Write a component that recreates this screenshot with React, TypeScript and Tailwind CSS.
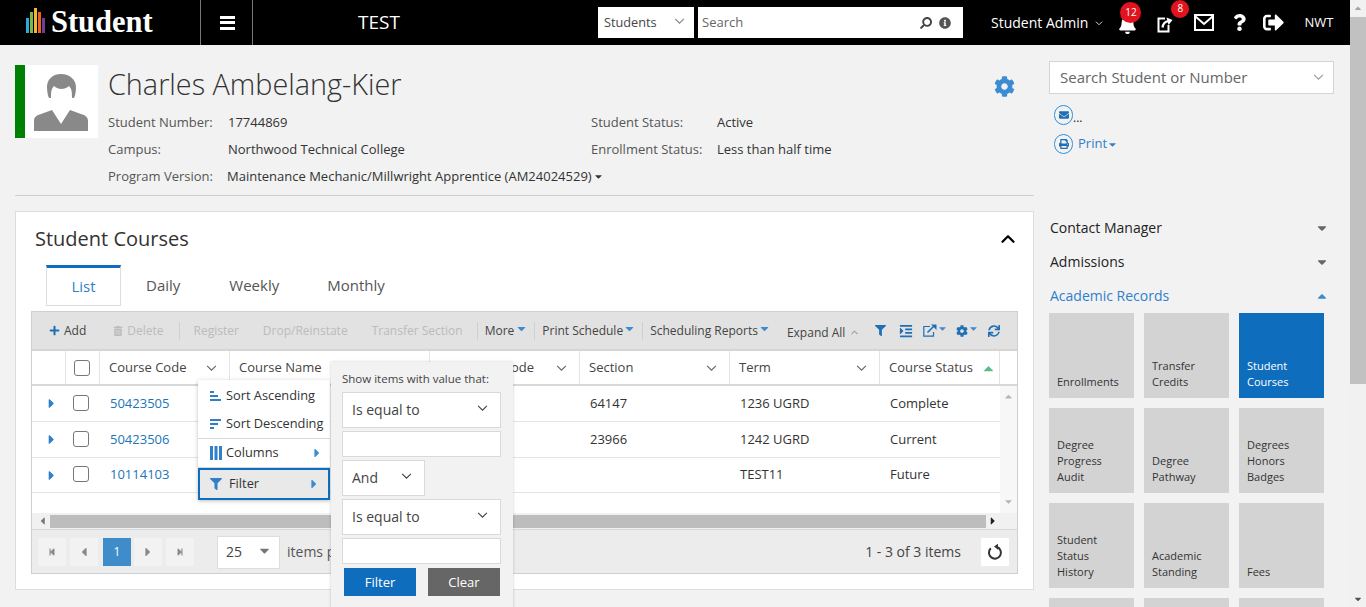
import React from 'react';
import { FaBell, FaQuestion, FaSignOutAlt, FaSearch, FaInfoCircle, FaCog, FaEnvelope, FaPrint, FaFilter, FaIndent, FaSync, FaPlus, FaTrashAlt, FaCaretDown, FaCaretUp, FaCaretRight, FaCaretLeft, FaStepBackward, FaStepForward } from 'react-icons/fa';
import { LuChevronUp } from 'react-icons/lu';

const Chevron = ({ className = '' }: { className?: string }) => (
  <svg viewBox="0 0 12 8" className={className} fill="none" stroke="currentColor" strokeWidth="1.3"><path d="M1 1l5 5 5-5" /></svg>
);

const Logo = () => (
  <svg width="20" height="26" viewBox="0 0 20 26" className="mb-[4px] shrink-0">
    <rect x="0" y="10" width="3" height="15" fill="#29a9e0" />
    <rect x="4" y="4" width="3" height="21" fill="#7ab648" />
    <rect x="8" y="0" width="3" height="25" fill="#f2b632" />
    <rect x="12" y="4" width="3" height="21" fill="#ee5f23" />
    <rect x="16" y="10" width="3" height="15" fill="#6f3c97" />
  </svg>
);

const Avatar = () => (
  <svg width="73" height="73" viewBox="0 0 73 73" fill="#898989">
    <path d="M36 9C27 9 22 15 22 22C22 27 23 31 24 33L26 33C26 28 26 24 29 21C31 23 34 24 36 24C39 24 42 23 44 21C47 24 47 28 47 33L49 33C50 31 51 27 51 22C51 15 45 9 36 9Z" />
    <path d="M9 66V56C9 52 12 50 16 49L27 45L36 59L45 45L56 49C60 50 63 52 63 56V66Z" />
  </svg>
);

const ShareIcon = () => (
  <svg width="16" height="17" viewBox="0 0 16 17" fill="none" className="mt-[3px]">
    <path d="M8 2.5H1.5v13h10V9" stroke="#fff" strokeWidth="2" />
    <path d="M5.5 11.5c.5-4 3-6 6-6.5" stroke="#fff" strokeWidth="2.2" />
    <path d="M9.5 1.5l6 2.5-4 5z" fill="#fff" />
  </svg>
);

const MailIcon = () => (
  <svg width="20" height="17" viewBox="0 0 20 17" fill="none" stroke="#fff" strokeWidth="2">
    <rect x="1" y="1" width="18" height="15" />
    <path d="M1.5 2.5L10 10l8.5-7.5" />
  </svg>
);

const ExtIcon = () => (
  <svg width="14" height="13" viewBox="0 0 14 13" fill="none" className="ml-[10px] text-[#1f6fb5]" stroke="currentColor">
    <path d="M7 2.5H.8v9.7h9.7V8" strokeWidth="1.2" />
    <path d="M4.5 8.5L11 2" strokeWidth="1.6" />
    <path d="M8 .5h5.5V6z" fill="currentColor" stroke="none" />
  </svg>
);

const ReloadIcon = () => (
  <svg width="16" height="18" viewBox="0 0 16 18" fill="none" className="text-[#333333]">
    <path d="M3.8 5.3A6 6 0 1 0 10 4" stroke="currentColor" strokeWidth="2" />
    <path d="M7 3.5L11 .8v6z" fill="currentColor" />
  </svg>
);

const Info = ({ label, value, w = 'w-[120px]' }: { label: string; value: React.ReactNode; w?: string }) => (
  <div className="flex h-[27px] items-center text-[13px] whitespace-nowrap">
    <span className={`${w} shrink-0 text-[#555555]`}>{label}</span>
    <span className="text-[#333333]">{value}</span>
  </div>
);

const Tile = ({ text, active }: { text: string[]; active?: boolean }) => (
  <div className={`flex h-[85px] w-[85px] flex-col justify-end px-2 pb-[8px] text-[11px] leading-4 ${active ? 'bg-[#0f6dbd] text-white' : 'bg-[#d3d3d3] text-[#333333]'}`}>
    {text.map((t) => <span key={t}>{t}</span>)}
  </div>
);

const Acc = ({ text, open }: { text: string; open?: boolean }) => (
  <div className={`flex h-[34px] items-center justify-between pl-px pr-[5px] text-sm ${open ? 'text-[#2f7fc9]' : 'text-[#222222]'}`}>
    <span>{text}</span>
    {open ? <FaCaretUp className="text-[#3d8bd0]" size={14} /> : <FaCaretDown className="text-[#666666]" size={14} />}
  </div>
);

const cols = ['w-[34px]', 'w-[34px]', 'w-[130px]', 'w-[200px]', 'w-[150px]', 'w-[150px]', 'w-[150px]', 'w-[120px]'];

const HeadCell = ({ text, w, sort, pad = 'pl-[9px]' }: { text: string; w: string; sort?: boolean; pad?: string }) => (
  <div className={`${w} ${pad} flex h-full shrink-0 items-center justify-between border-r border-[#e4e4e4] pr-[12px] pt-px text-[13px] text-[#444444]`}>
    <span className="whitespace-nowrap">{text}</span>
    {sort ? <FaCaretUp className="-mr-[9px] text-[#5cb98a]" size={15} /> : <Chevron className="h-[7px] w-[11px] text-[#666666]" />}
  </div>
);

const Row = ({ code, section, term, status, h = 'h-[36px]' }: { code: string; section: string; term: string; status: string; h?: string }) => (
  <div className={`${h} flex items-center border-b border-[#e4e4e4] text-[13px] text-[#333333]`}>
    <div className={`${cols[0]} flex shrink-0 justify-center pl-[4px]`}><FaCaretRight className="text-[#2f7fc9]" size={15} /></div>
    <div className={`${cols[1]} flex shrink-0 justify-center pb-[2px] pr-[4px]`}><span className="h-4 w-4 rounded-[3px] border border-[#777777] bg-white" /></div>
    <div className={`${cols[2]} shrink-0 pl-[10px] text-[#1a75bb]`}>{code}</div>
    <div className={`${cols[3]} shrink-0`} />
    <div className={`${cols[4]} shrink-0`} />
    <div className={`${cols[5]} shrink-0 pl-[10px]`}>{section}</div>
    <div className={`${cols[6]} shrink-0 pl-[10px]`}>{term}</div>
    <div className={`${cols[7]} shrink-0 pl-[10px]`}>{status}</div>
  </div>
);

const Pg = ({ children, active }: { children?: React.ReactNode; active?: boolean }) => (
  <div className={`flex h-7 w-7 items-center justify-center text-xs ${active ? 'bg-[#3f8ccb] text-white' : 'bg-[#f2f2f2] text-[#8a8a8a]'}`}>{children}</div>
);

const Sel = ({ text, w = 'w-full', h = 'h-[36px]' }: { text: string; w?: string; h?: string }) => (
  <div className={`${w} ${h} flex items-center justify-between border border-[#d9d9d9] bg-white pl-[9px] pr-[12px] text-sm text-[#444444]`}>
    <span>{text}</span>
    <Chevron className="mb-1 h-[7px] w-[11px] text-[#444444]" />
  </div>
);

const MenuItem = ({ icon, text, arrow }: { icon: React.ReactNode; text: string; arrow?: boolean }) => (
  <div className="flex h-[28px] items-center pl-[9px] pr-[6px] text-[12.8px] text-[#333333]">
    <span className="flex w-[17px] shrink-0 justify-center text-[#2f7fc9]">{icon}</span>
    <span className="ml-[2px] flex-1 whitespace-nowrap">{text}</span>
    {arrow && <FaCaretRight className="text-[#3d8bd0]" size={14} />}
  </div>
);

const SortIcon = ({ desc }: { desc?: boolean }) => (
  <svg width="11" height="10" viewBox="0 0 11 10" fill="#2f7fc9">
    {desc ? (<><rect width="11" height="2" /><rect y="4" width="8" height="2" /><rect y="8" width="4" height="2" /></>) : (<><rect width="4" height="2" /><rect y="4" width="8" height="2" /><rect y="8" width="11" height="2" /></>)}
  </svg>
);

const ColumnsIcon = () => (
  <svg width="12" height="14" viewBox="0 0 12 14" fill="#2f7fc9"><rect width="3" height="14" /><rect x="4.5" width="3" height="14" /><rect x="9" width="3" height="14" /></svg>
);

export default function App() {
  return (
    <div className="flex h-[607px] w-[1366px] overflow-hidden bg-[#f2f2f2] font-['Open_Sans',sans-serif]">
      <div className="relative w-[1350px] shrink-0">
        <header className="flex h-[45px] items-center bg-black text-white">
          <div className="flex w-[200px] items-center pl-[26px]">
            <Logo />
            <span className="ml-[5px] font-['Liberation_Serif',serif] text-[30.5px] font-bold leading-none">Student</span>
          </div>
          <div className="flex h-full w-[53px] items-center justify-center border-x border-[#777777] pl-px">
            <div className="flex h-[14px] w-[15px] flex-col justify-between"><span className="h-[3px] bg-white" /><span className="h-[3px] bg-white" /><span className="h-[3px] bg-white" /></div>
          </div>
          <div className="ml-[105px] mb-px w-[240px] text-[19px]">TEST</div>
          <div className="flex h-[31px] w-[96px] items-center justify-between bg-white pl-[6px] pr-[9px] pt-px text-[12.7px] text-[#444444]">
            <span>Students</span><Chevron className="mb-1 h-[7px] w-[11px] text-[#888888]" />
          </div>
          <div className="ml-[4px] flex h-[31px] w-[265px] items-center bg-white pl-[4px] pr-[12px] text-[13px] text-[#666666]">
            <span className="flex-1">Search</span>
            <FaSearch size={12} className="-scale-x-100 text-[#444444]" />
            <FaInfoCircle size={12} className="ml-[7px] text-[#555555]" />
          </div>
          <div className="ml-[28px] flex items-center text-sm">
            <span>Student Admin</span><Chevron className="ml-[7px] mt-px h-[5px] w-[8px]" />
          </div>
          <div className="relative ml-[15px] mt-[3px] w-[20px]">
            <FaBell size={19} />
            <span className="absolute -top-[13px] left-[2px] flex h-[21px] w-[21px] items-center justify-center rounded-full bg-[#e2131e] text-[10px]">12</span>
          </div>
          <div className="relative ml-[19px] w-[16px]">
            <ShareIcon />
            <span className="absolute -top-[13px] left-[14px] flex h-[18px] w-[18px] items-center justify-center rounded-full bg-[#e2131e] text-[10px]">8</span>
          </div>
          <div className="ml-[21px]"><MailIcon /></div>
          <FaQuestion size={17} className="ml-[17px]" />
          <FaSignOutAlt size={21} className="ml-[15px]" />
          <span className="ml-[20px] text-[13px]">NWT</span>
        </header>

        <div className="flex pl-[15px]">
          <main className="w-[1019px] shrink-0">
            <section className="flex h-[151px] border-b border-[#cfcfcf] pt-[20px]">
              <div className="flex h-[73px] w-[83px] shrink-0 justify-end border-l-[10px] border-[#008000] bg-white"><Avatar /></div>
              <div className="ml-[10px] flex-1">
                <div className="relative">
                  <h1 className="h-[44px] text-[28.8px] font-light leading-[38px] text-[#333333]">Charles Ambelang-Kier</h1>
                  <FaCog size={21} className="absolute right-[19px] top-[11px] text-[#3d8bd0]" />
                </div>
                <div className="flex">
                  <div className="w-[483px] shrink-0">
                    <Info label="Student Number:" value="17744869" />
                    <Info label="Campus:" value="Northwood Technical College" />
                    <Info label="Program Version:" value={<span className="-ml-px inline-flex items-center">Maintenance Mechanic/Millwright Apprentice (AM24024529)<FaCaretDown size={11} className="ml-px" /></span>} />
                  </div>
                  <div>
                    <Info label="Student Status:" value="Active" w="w-[126px]" />
                    <Info label="Enrollment Status:" value="Less than half time" w="w-[126px]" />
                  </div>
                </div>
              </div>
            </section>

            <section className="mt-[15px] h-[379px] border border-[#dddddd] bg-white px-[15px]">
              <div className="flex h-[53px] items-center justify-between pl-[4px] pr-0">
                <h2 className="text-xl text-[#333333]">Student Courses</h2>
                <LuChevronUp size={22} strokeWidth={2.5} className="-mr-px text-black" />
              </div>
              <div className="flex h-[46px] pl-[15px]">
                <div className="flex h-[41px] w-[75px] items-center justify-center border-x border-b border-t-[3px] border-[#dddddd] border-t-[#0f6dbd] text-[15px] text-[#2f7fc9]">List</div>
                <div className="ml-[25px] flex h-[41px] items-center text-[15px] text-[#555555]">Daily</div>
                <div className="ml-[49px] flex h-[41px] items-center text-[15px] text-[#555555]">Weekly</div>
                <div className="ml-[48px] flex h-[41px] items-center text-[15px] text-[#555555]">Monthly</div>
              </div>

              <div className="relative w-[987px] border border-[#cfcfcf]">
                <div className="flex h-[39px] items-center border-b-2 border-[#d5d5d5] bg-[#e2e2e2] pl-[17px] text-xs text-[#bbbbbb]">
                  <FaPlus size={11} className="text-[#1f6fb5]" /><span className="ml-[4px] text-[#444444]">Add</span>
                  <FaTrashAlt size={10} className="ml-[27px] text-[#bbbbbb]" /><span className="ml-[4px]">Delete</span>
                  <span className="ml-[15px] h-[18px] border-l border-[#d0d0d0]" />
                  <span className="ml-[14px]">Register</span>
                  <span className="ml-[24px]">Drop/Reinstate</span>
                  <span className="ml-[24px]">Transfer Section</span>
                  <span className="ml-[14px] h-[18px] border-l border-[#d0d0d0]" />
                  <span className="ml-[7px] text-[#444444]">More</span><FaCaretDown size={13} className="mb-1 ml-px text-[#3d8bd0]" />
                  <span className="ml-[6px] h-[18px] border-l border-[#d0d0d0]" />
                  <span className="ml-[7px] text-[#444444]">Print Schedule</span><FaCaretDown size={13} className="mb-1 text-[#3d8bd0]" />
                  <span className="ml-[6px] h-[18px] border-l border-[#d0d0d0]" />
                  <span className="ml-[7px] text-[#444444]">Scheduling Reports</span><FaCaretDown size={13} className="mb-1 text-[#3d8bd0]" />
                  <span className="ml-[16px] mt-[4px] text-[#444444]">Expand All</span><LuChevronUp size={11} className="ml-[4px] mt-[4px] text-[#777777]" />
                  <FaFilter size={11} className="ml-[15px] text-[#1f6fb5]" />
                  <FaIndent size={14} className="ml-[13px] text-[#1f6fb5]" />
                  <ExtIcon /><FaCaretDown size={11} className="mb-1 text-[#3d8bd0]" />
                  <FaCog size={12} className="ml-[8px] text-[#1f6fb5]" /><FaCaretDown size={11} className="mb-1 text-[#3d8bd0]" />
                  <FaSync size={12} className="ml-[9px] text-[#1f6fb5]" />
                </div>
                <div className="flex h-[35px] border-b-2 border-[#d8d8d8] bg-white">
                  <div className={`${cols[0]} shrink-0 border-r border-[#e4e4e4]`} />
                  <div className={`${cols[1]} flex shrink-0 items-center justify-center border-r border-[#e4e4e4] pr-px`}><span className="h-4 w-4 rounded-[3px] border border-[#777777]" /></div>
                  <HeadCell text="Course Code" w={cols[2]} />
                  <HeadCell text="Course Name" w={cols[3]} />
                  <HeadCell text="Delivery Mode" w={cols[4]} pad="pl-[17px]" />
                  <HeadCell text="Section" w={cols[5]} />
                  <HeadCell text="Term" w={cols[6]} />
                  <HeadCell text="Course Status" w={cols[7]} sort />
                </div>
                <div className="flex h-[127px]">
                  <div className="w-[968px] shrink-0">
                    <Row code="50423505" section="64147" term="1236 UGRD" status="Complete" />
                    <Row code="50423506" section="23966" term="1242 UGRD" status="Current" />
                    <Row code="10114103" section="" term="TEST11" status="Future" h="h-[35px]" />
                  </div>
                  <div className="flex w-[17px] flex-col items-center justify-between bg-[#f7f7f7] pb-[6px] pt-[5px] text-[#b5b5b5]">
                    <FaCaretUp size={11} /><FaCaretDown size={11} />
                  </div>
                </div>
                <div className="flex h-[16px] items-center bg-[#f1f1f1] text-[#777777]">
                  <FaCaretLeft size={12} className="ml-[3px] w-[15px]" />
                  <div className="h-[13px] w-[936px] bg-[#bdbdbd]" />
                  <FaCaretRight size={12} className="ml-px text-[#222222]" />
                </div>
                <div className="flex h-[44px] items-center border-t border-[#d8d8d8] bg-[#ececec] pl-[6px] pr-[8px] pt-px">
                  <Pg><FaStepBackward size={8} /></Pg>
                  <div className="ml-[4px]"><Pg><FaCaretLeft size={14} /></Pg></div>
                  <div className="ml-[5px]"><Pg active>1</Pg></div>
                  <div className="ml-[3px]"><Pg><FaCaretRight size={14} /></Pg></div>
                  <div className="ml-[4px]"><Pg><FaStepForward size={8} /></Pg></div>
                  <div className="ml-[23px] flex h-[33px] w-[63px] items-center justify-between border border-[#dddddd] bg-white pl-[8px] pr-[7px] text-sm text-[#444444]">25<FaCaretDown size={15} className="mb-1 text-[#777777]" /></div>
                  <span className="ml-[7px] flex-1 text-sm text-[#555555]">items per page</span>
                  <span className="text-sm text-[#444444]">1 - 3 of 3 items</span>
                  <div className="ml-[20px] flex h-7 w-7 items-center justify-center bg-white"><ReloadIcon /></div>
                </div>

                <div className="absolute left-[166px] top-[68px] w-[132px] bg-white shadow-[0_1px_4px_rgba(0,0,0,0.25)]">
                  <div className="border-b border-[#d8d8d8] pt-[2px]">
                    <MenuItem icon={<SortIcon />} text="Sort Ascending" />
                    <MenuItem icon={<SortIcon desc />} text="Sort Descending" />
                  </div>
                  <div className="border-b border-[#d8d8d8]">
                    <MenuItem icon={<ColumnsIcon />} text="Columns" arrow />
                  </div>
                  <div className="flex h-[32px] items-center border-2 border-[#0f6dbd] bg-[#e9e9e9] pl-[10px] pr-[7px] text-[12.8px] text-[#333333]">
                    <FaFilter size={12} className="text-[#2f7fc9]" />
                    <span className="ml-[7px] flex-1">Filter</span>
                    <FaCaretRight className="text-[#3d8bd0]" size={14} />
                  </div>
                </div>

                <div className="absolute left-[299px] top-[50px] h-[260px] w-[182px] bg-[#f2f2f2] pl-[11px] pr-[12px] shadow-[0_0_3px_rgba(0,0,0,0.2)]">
                  <p className="mt-[9px] whitespace-nowrap text-[11.5px] leading-4 text-[#444444]">Show items with value that:</p>
                  <div className="mt-[5px] flex flex-col gap-[3px]">
                    <Sel text="Is equal to" />
                    <div className="h-[26px] border border-[#d9d9d9] bg-white" />
                    <Sel text="And" w="w-[83px]" />
                    <Sel text="Is equal to" />
                    <div className="h-[26px] border border-[#d9d9d9] bg-white" />
                  </div>
                  <div className="mt-[4px] flex justify-between pl-[2px] pr-px text-[13px] text-white">
                    <div className="flex h-7 w-[72px] items-center justify-center bg-[#0f6dbd] pt-px">Filter</div>
                    <div className="flex h-7 w-[72px] items-center justify-center bg-[#666666] pt-px">Clear</div>
                  </div>
                </div>
              </div>
            </section>
          </main>

          <aside className="ml-[15px] w-[285px] shrink-0">
            <div className="mt-[16px] flex h-[33px] items-center justify-between border border-[#d4d4d4] bg-white pl-[10px] pr-[9px] text-[15px] text-[#666666]">
              <span>Search Student or Number</span><Chevron className="h-[7px] w-[11px] text-[#999999]" />
            </div>
            <div className="mt-[11px] flex items-end pl-[5px] text-[#222222]">
              <span className="flex h-[20px] w-[19px] items-center justify-center rounded-full border-[1.5px] border-[#2f8fd8] text-[#1f6fb5]"><FaEnvelope size={10} /></span>
              <span className="text-xs leading-[14px]">...</span>
            </div>
            <div className="mt-[9px] flex items-center pl-[5px] text-[13px] text-[#2f7fc9]">
              <span className="flex h-[20px] w-[19px] items-center justify-center rounded-full border-[1.5px] border-[#2f8fd8] text-[#1f6fb5]"><FaPrint size={10} /></span>
              <span className="ml-[5px]">Print</span><FaCaretDown size={11} />
            </div>
            <div className="mt-[57px]">
              <Acc text="Contact Manager" />
              <Acc text="Admissions" />
              <Acc text="Academic Records" open />
            </div>
            <div className="grid grid-cols-[85px_85px_85px] gap-[10px]">
              <Tile text={['Enrollments']} />
              <Tile text={['Transfer', 'Credits']} />
              <Tile text={['Student', 'Courses']} active />
              <Tile text={['Degree', 'Progress', 'Audit']} />
              <Tile text={['Degree', 'Pathway']} />
              <Tile text={['Degrees', 'Honors', 'Badges']} />
              <Tile text={['Student', 'Status', 'History']} />
              <Tile text={['Academic', 'Standing']} />
              <Tile text={['Fees']} />
              <Tile text={[]} />
              <Tile text={[]} />
              <Tile text={[]} />
            </div>
          </aside>
        </div>
      </div>
      <div className="flex w-[16px] shrink-0 flex-col items-center bg-[#f1f1f1] text-[#505050]">
        <FaCaretUp size={10} className="mt-[3px] text-[#a3a3a3]" />
        <div className="mt-[4px] h-[367px] w-full bg-[#c1c1c1]" />
        <div className="flex-1" />
        <FaCaretDown size={10} className="mb-[3px]" />
      </div>
    </div>
  );
}
